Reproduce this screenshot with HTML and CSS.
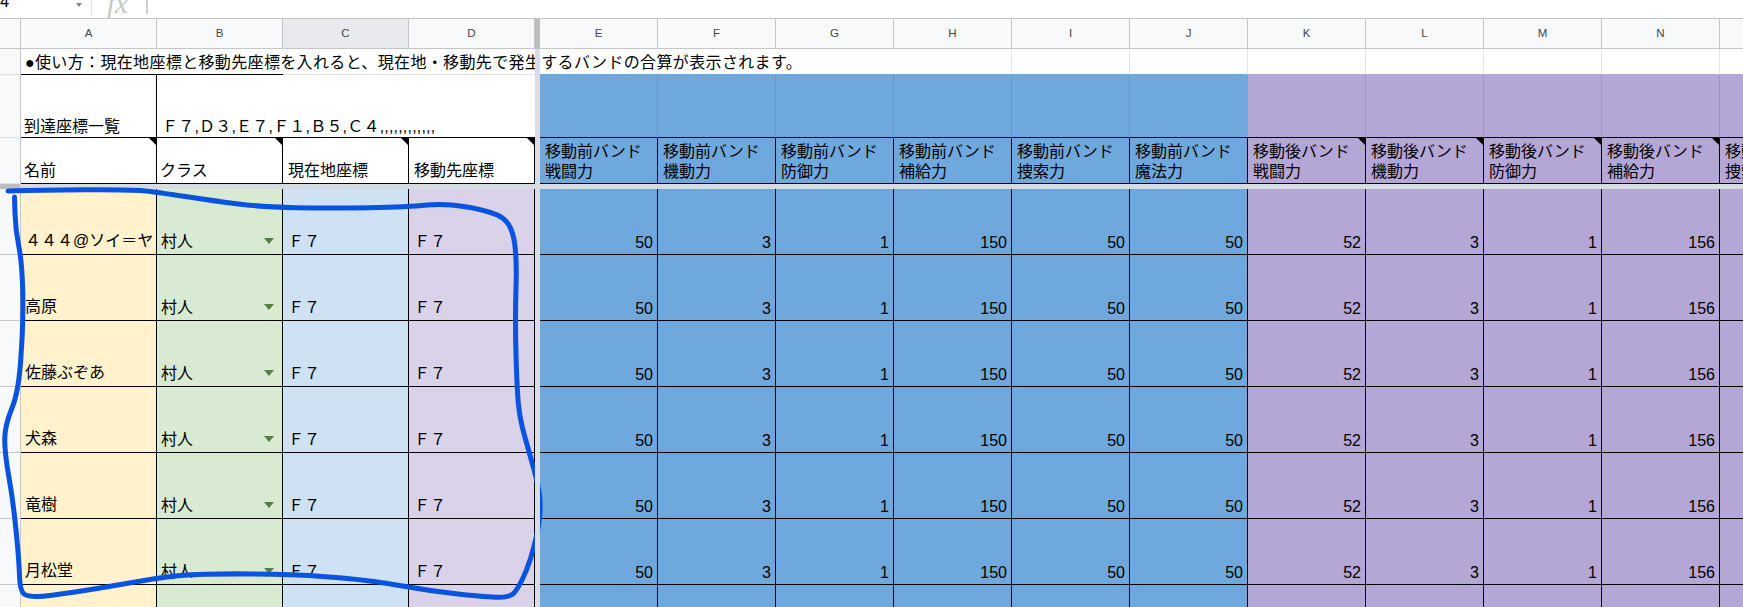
FILE: index.html
```html
<!DOCTYPE html>
<html lang="ja">
<head>
<meta charset="utf-8">
<title>Sheet</title>
<link rel="stylesheet" href="styles.css">
</head>
<body>
<div class="app">
  <div class="formula">
    <div class="namebox"><span class="ref">4</span><i class="caret"></i></div>
    <div class="fx">fx</div>
    <div class="fxsep"></div>
  </div>
  <div class="sheet">
    <div class="row r-head">
      <div class="corner"></div>
      <div class="ch">A</div><div class="ch">B</div><div class="ch sel">C</div><div class="ch">D</div>
      <div class="fz fz-head"></div>
      <div class="ch">E</div><div class="ch">F</div><div class="ch">G</div><div class="ch">H</div><div class="ch">I</div><div class="ch">J</div><div class="ch">K</div><div class="ch">L</div><div class="ch">M</div><div class="ch">N</div><div class="ch">O</div>
    </div>
    <div class="row r-1">
      <div class="g"></div>
      <div class="c k-b nowrap usage">●使い方：現在地座標と移動先座標を入れると、現在地・移動先で発生するバンドの合算が表示されます。</div>
      <div class="c k-b"></div><div class="c l-b"></div><div class="c l-b"></div>
      <div class="fz"></div>
      <div class="c blue-b"></div><div class="c blue-b"></div><div class="c blue-b"></div>
      <div class="c l-all"></div><div class="c l-all"></div><div class="c l-all"></div><div class="c l-all"></div><div class="c l-all"></div><div class="c l-all"></div><div class="c l-all"></div><div class="c l-all"></div>
    </div>
    <div class="row r-2">
      <div class="g"></div>
      <div class="c k-r k-b first">到達座標一覧</div>
      <div class="c k-b nowrap list">Ｆ７,Ｄ３,Ｅ７,Ｆ１,Ｂ５,Ｃ４,,,,,,,,,,,,</div>
      <div class="c k-b"></div><div class="c k-b"></div>
      <div class="fz"></div>
      <div class="c blue soft"></div><div class="c blue soft"></div><div class="c blue soft"></div><div class="c blue soft"></div><div class="c blue soft"></div><div class="c blue k-r-j k-b"></div>
      <div class="c purple soft"></div><div class="c purple soft"></div><div class="c purple soft"></div><div class="c purple soft"></div><div class="c purple soft"></div>
    </div>
    <div class="row r-3">
      <div class="g"></div>
      <div class="c box note single first">名前</div>
      <div class="c box note single first">クラス</div>
      <div class="c box note single">現在地座標</div>
      <div class="c box note single">移動先座標</div>
      <div class="fz"></div>
      <div class="c box double blue">移動前バンド<br>戦闘力</div>
      <div class="c box double blue">移動前バンド<br>機動力</div>
      <div class="c box double blue">移動前バンド<br>防御力</div>
      <div class="c box double blue">移動前バンド<br>補給力</div>
      <div class="c box double blue">移動前バンド<br>捜索力</div>
      <div class="c box double blue">移動前バンド<br>魔法力</div>
      <div class="c box double purple note">移動後バンド<br>戦闘力</div>
      <div class="c box double purple note">移動後バンド<br>機動力</div>
      <div class="c box double purple note">移動後バンド<br>防御力</div>
      <div class="c box double purple note">移動後バンド<br>補給力</div>
      <div class="c box double purple">移動後バンド<br>捜索力</div>
    </div>
    <div class="fzrow"><div class="fzrow-g"></div></div>

    <div class="row r-d">
      <div class="g g-line"></div>
      <div class="c box cream name">４４４@ソイ＝ヤ</div>
      <div class="c box green"><span>村人</span><i class="dd"></i></div>
      <div class="c box lblue pos">Ｆ７</div>
      <div class="c box lilac pos">Ｆ７</div>
      <div class="fz"></div>
      <div class="c box blue num">50</div><div class="c box blue num">3</div><div class="c box blue num">1</div><div class="c box blue num">150</div><div class="c box blue num">50</div><div class="c box blue num">50</div>
      <div class="c box purple num">52</div><div class="c box purple num">3</div><div class="c box purple num">1</div><div class="c box purple num">156</div><div class="c box purple num"></div>
    </div>
    <div class="row r-d">
      <div class="g g-line"></div>
      <div class="c box cream name">高原</div>
      <div class="c box green"><span>村人</span><i class="dd"></i></div>
      <div class="c box lblue pos">Ｆ７</div>
      <div class="c box lilac pos">Ｆ７</div>
      <div class="fz"></div>
      <div class="c box blue num">50</div><div class="c box blue num">3</div><div class="c box blue num">1</div><div class="c box blue num">150</div><div class="c box blue num">50</div><div class="c box blue num">50</div>
      <div class="c box purple num">52</div><div class="c box purple num">3</div><div class="c box purple num">1</div><div class="c box purple num">156</div><div class="c box purple num"></div>
    </div>
    <div class="row r-d">
      <div class="g g-line"></div>
      <div class="c box cream name">佐藤ぶぞあ</div>
      <div class="c box green"><span>村人</span><i class="dd"></i></div>
      <div class="c box lblue pos">Ｆ７</div>
      <div class="c box lilac pos">Ｆ７</div>
      <div class="fz"></div>
      <div class="c box blue num">50</div><div class="c box blue num">3</div><div class="c box blue num">1</div><div class="c box blue num">150</div><div class="c box blue num">50</div><div class="c box blue num">50</div>
      <div class="c box purple num">52</div><div class="c box purple num">3</div><div class="c box purple num">1</div><div class="c box purple num">156</div><div class="c box purple num"></div>
    </div>
    <div class="row r-d">
      <div class="g g-line"></div>
      <div class="c box cream name">犬森</div>
      <div class="c box green"><span>村人</span><i class="dd"></i></div>
      <div class="c box lblue pos">Ｆ７</div>
      <div class="c box lilac pos">Ｆ７</div>
      <div class="fz"></div>
      <div class="c box blue num">50</div><div class="c box blue num">3</div><div class="c box blue num">1</div><div class="c box blue num">150</div><div class="c box blue num">50</div><div class="c box blue num">50</div>
      <div class="c box purple num">52</div><div class="c box purple num">3</div><div class="c box purple num">1</div><div class="c box purple num">156</div><div class="c box purple num"></div>
    </div>
    <div class="row r-d">
      <div class="g g-line"></div>
      <div class="c box cream name">竜樹</div>
      <div class="c box green"><span>村人</span><i class="dd"></i></div>
      <div class="c box lblue pos">Ｆ７</div>
      <div class="c box lilac pos">Ｆ７</div>
      <div class="fz"></div>
      <div class="c box blue num">50</div><div class="c box blue num">3</div><div class="c box blue num">1</div><div class="c box blue num">150</div><div class="c box blue num">50</div><div class="c box blue num">50</div>
      <div class="c box purple num">52</div><div class="c box purple num">3</div><div class="c box purple num">1</div><div class="c box purple num">156</div><div class="c box purple num"></div>
    </div>
    <div class="row r-d">
      <div class="g g-line"></div>
      <div class="c box cream name">月松堂</div>
      <div class="c box green"><span>村人</span><i class="dd"></i></div>
      <div class="c box lblue pos">Ｆ７</div>
      <div class="c box lilac pos">Ｆ７</div>
      <div class="fz"></div>
      <div class="c box blue num">50</div><div class="c box blue num">3</div><div class="c box blue num">1</div><div class="c box blue num">150</div><div class="c box blue num">50</div><div class="c box blue num">50</div>
      <div class="c box purple num">52</div><div class="c box purple num">3</div><div class="c box purple num">1</div><div class="c box purple num">156</div><div class="c box purple num"></div>
    </div>
    <div class="row r-d">
      <div class="g g-line"></div>
      <div class="c box cream"></div>
      <div class="c box green"></div>
      <div class="c box lblue"></div>
      <div class="c box lilac"></div>
      <div class="fz"></div>
      <div class="c box blue"></div><div class="c box blue"></div><div class="c box blue"></div><div class="c box blue"></div><div class="c box blue"></div><div class="c box blue"></div>
      <div class="c box purple"></div><div class="c box purple"></div><div class="c box purple"></div><div class="c box purple"></div><div class="c box purple"></div>
    </div>
  </div>
  <svg class="scribble" width="1743" height="607" viewBox="0 0 1743 607" aria-hidden="true">
    <path d="M8 191 Q40 190 85 189.7 Q130 189.5 143 190.7 Q156 192 185.5 196.5 Q215 201 238.5 204 Q262 207 296 207.7 Q330 208.5 369 207.7 Q408 207 427 205 Q446 203 470 207.5 Q494 212 502.5 218 Q511 224 514 239.5 Q517 255 516 287.5 Q515 320 516 355 Q517 390 518.5 405 Q520 420 525 437.5 Q530 455 534.5 471.5 Q539 488 539.75 497.5 Q540.5 507 539.75 516 Q539 525 536.5 536 Q534 547 530.5 558.5 Q527 570 522 580 Q517 590 513.5 593.5 Q510 597 500 597.25 Q490 597.5 460 594.25 Q430 591 402.5 586 Q375 581 342.5 578 Q310 575 272.5 574.25 Q235 573.5 205.5 574.25 Q176 575 153 579 Q130 583 100 588 Q70 593 50 595.5 Q30 598 24 594 Q20 591 19.5 575.5 Q19 560 16 530 Q13 500 8.75 476 Q4.5 452 4.75 438.5 Q5 425 12 408 Q19 391 21 355.5 Q23.5 320 22.75 291 Q22 262 18.75 246 Q15.5 230 15 213.5 L14.5 197"/>
  </svg>
</div>
</body>
</html>
```

FILE: styles.css
```css
html, body {
  margin: 0;
  padding: 0;
  height: 100%;
  overflow: hidden;
  background: #fff;
}

.app {
  position: relative;
  width: 1743px;
  height: 607px;
  overflow: hidden;
  color: #000;
  font-family: "Liberation Sans", "Noto Sans CJK JP", sans-serif;
  font-size: 16px;
  line-height: 20px;
}

/* formula bar */
.formula {
  box-sizing: border-box;
  height: 19px;
  display: flex;
  border-bottom: 1px solid #c4c7c5;
  overflow: hidden;
}
.namebox {
  box-sizing: border-box;
  width: 92px;
  height: 15px;
  display: flex;
  justify-content: space-between;
  padding-right: 9px;
  border-right: 1px solid #e0e0e0;
}
.ref {
  font-family: Roboto, "Liberation Sans", sans-serif;
  font-size: 16px;
  line-height: 16px;
  margin-top: -6px;
}
.caret {
  width: 0;
  height: 0;
  margin-top: 3px;
  border-left: 3.5px solid transparent;
  border-right: 3.5px solid transparent;
  border-top: 4px solid #80868b;
}
.fx {
  width: 54px;
  padding-left: 15px;
  box-sizing: border-box;
  font-family: "Liberation Serif", serif;
  font-style: italic;
  font-size: 29px;
  line-height: 24px;
  margin-top: -9px;
  color: #c4c7c5;
}
.fxsep {
  width: 2px;
  height: 14px;
  background: #cfd1d0;
}

/* grid */
.row {
  display: grid;
  grid-template-columns: 21px 136px 126px 126px 126px 5px repeat(11, 118px);
}
.r-head { height: 30px; }
.r-1 { height: 26px; }
.r-2 { height: 63px; }
.r-3 { height: 46px; }
.r-d { height: 66px; }

.corner, .ch, .g {
  box-sizing: border-box;
  background: #f8f9fa;
  border-right: 1px solid #c4c7c5;
  border-bottom: 1px solid #c4c7c5;
}
.ch {
  font-size: 11.5px;
  line-height: 29px;
  text-align: center;
  color: #444746;
}
.ch.sel { background: #e8eaed; }
.g { border-bottom-color: #dfe1e3; }
.g-line { border-bottom-color: #c4c7c5; }

.fz { background: #d7dce6; position: relative; z-index: 1; }
.fz-head { background: #bdbdbd; }

.fzrow {
  height: 5px;
  background: #d7dbe2;
}
.fzrow-g {
  width: 20px;
  height: 5px;
  background: #bdbdbd;
}

.c {
  box-sizing: border-box;
  min-width: 0;
  padding: 0 4px 0 5px;
  display: flex;
  align-items: flex-end;
}
.nowrap { white-space: nowrap; }
.usage { letter-spacing: 0.35px; padding-left: 4px; padding-bottom: 1px; }
.first { padding-left: 3px; }

.k-b { border-bottom: 1px solid #000; }
.k-r { border-right: 1px solid #000; }
.l-b { border-bottom: 1px solid #e2e3e3; }
.blue-b { border-bottom: 1px solid #6fa8dc; }
.l-all { border-bottom: 1px solid #e2e3e3; border-right: 1px solid #e2e3e3; }
.r-1 .l-all:nth-last-child(-n+5) { border-bottom-color: #b4a7d6; }
.r-1 .l-all:nth-child(n+10):nth-child(-n+12) { border-bottom-color: #6fa8dc; }
.list { padding-left: 5px; letter-spacing: 0.2px; }

.blue { background: #6fa8dc; }
.purple { background: #b4a7d6; }
.cream { background: #fff2cc; }
.green { background: #d9ead3; justify-content: space-between; padding-left: 4px; padding-right: 8px; padding-bottom: 2px; }
.lblue { background: #cfe2f3; }
.lilac { background: #d9d2e9; }

.soft { border-right: 1px solid rgba(60, 80, 110, 0.2); border-bottom: 1px solid #000; }
.k-r-j { border-right: 0; }

.box {
  border-right: 1px solid #000;
  border-bottom: 1px solid #000;
  position: relative;
}
.single { padding-bottom: 2px; }
.double { display: block; padding-top: 4px; }

.note::after {
  content: "";
  position: absolute;
  top: 0;
  right: 0;
  width: 0;
  height: 0;
  border-top: 7px solid #000;
  border-left: 7px solid transparent;
}

.name { overflow: hidden; white-space: nowrap; padding-left: 4px; padding-bottom: 3px; padding-right: 0; }
.pos { padding-bottom: 2px; padding-left: 5px; }
.num { justify-content: flex-end; padding-bottom: 1px; }

.dd {
  width: 0;
  height: 0;
  margin-bottom: 8px;
  border-left: 5px solid transparent;
  border-right: 5px solid transparent;
  border-top: 6px solid #54803f;
}

.scribble {
  position: absolute;
  top: 0;
  left: 0;
  pointer-events: none;
}
.scribble path {
  fill: none;
  stroke: #0a52e0;
  stroke-width: 5;
  stroke-linecap: round;
  stroke-linejoin: round;
}
```
